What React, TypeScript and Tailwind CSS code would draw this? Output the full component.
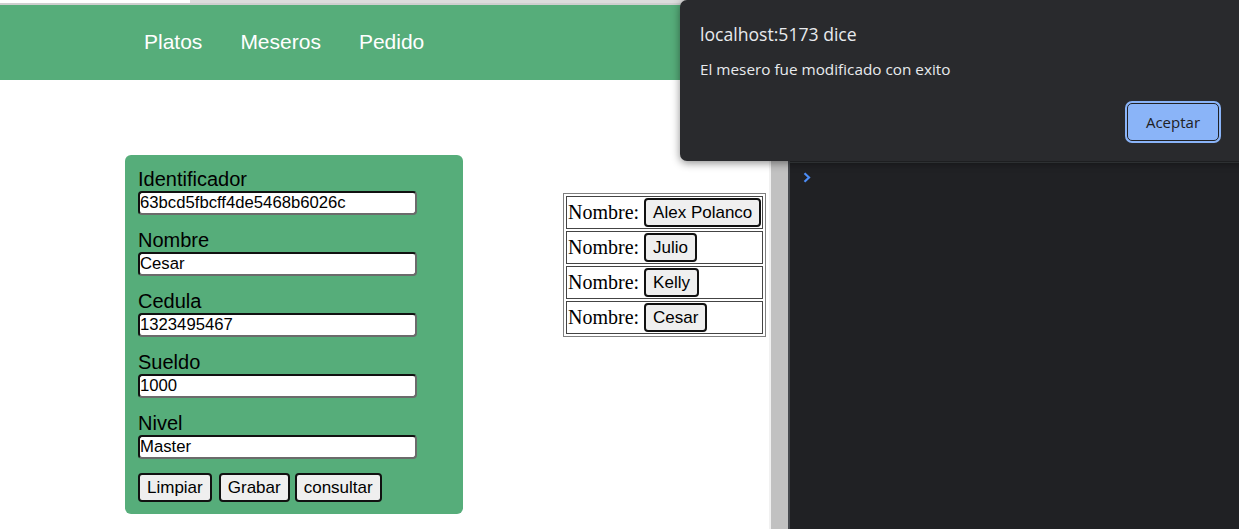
import React from 'react';

const campos = [
  { label: 'Identificador', value: '63bcd5fbcff4de5468b6026c' },
  { label: 'Nombre', value: 'Cesar' },
  { label: 'Cedula', value: '1323495467' },
  { label: 'Sueldo', value: '1000' },
  { label: 'Nivel', value: 'Master' },
];

const meseros = ['Alex Polanco', 'Julio', 'Kelly', 'Cesar'];

const App: React.FC = () => {
  return (
    <div className="relative w-[1239px] h-[529px] overflow-hidden flex bg-white font-['Liberation_Sans',Arial,sans-serif] text-black">
      {/* pagina */}
      <div className="w-[769px] flex flex-col shrink-0">
        <div className="h-[5px] flex">
          <div className="w-[190px] bg-white border-b-2 border-[#cfcfcf]"></div>
          <div className="flex-1 bg-[#dcdcdc] border-b-2 border-[#cfcfcf]"></div>
        </div>
        <nav className="h-[75px] bg-[#56ad7a] flex items-center pl-[144px] gap-[38px] text-white text-[21px] pb-[2px]">
          <span>Platos</span>
          <span>Meseros</span>
          <span>Pedido</span>
        </nav>

        <div className="flex items-start">
          <form className="ml-[125px] mt-[75px] w-[338px] bg-[#56ad7a] rounded-[6px] pt-[13px] pl-[13px] pb-[12px]">
            {campos.map(c => (
              <div key={c.label} className="mb-[14px]">
                <div className="text-[20px] leading-[23px]">{c.label}</div>
                <input
                  readOnly
                  defaultValue={c.value}
                  className="block w-[279px] h-[24px] px-0 bg-white text-[16.7px] text-black rounded-[4px] border-2 border-t-[#111] border-l-[#111] border-b-[#6b6b6b] border-r-[#6b6b6b] outline-none"
                />
              </div>
            ))}
            <div className="flex">
              <button type="button" className="h-[29px] px-[7px] text-[17px] bg-[#efefef] border-2 border-[#111] rounded-[4px]">Limpiar</button>
              <button type="button" className="ml-[7px] h-[29px] px-[7px] text-[17px] bg-[#efefef] border-2 border-[#111] rounded-[4px]">Grabar</button>
              <button type="button" className="ml-[5px] h-[29px] px-[7px] text-[17px] bg-[#efefef] border-2 border-[#111] rounded-[4px]">consultar</button>
            </div>
          </form>

          <table className="ml-[100px] mt-[113px] border border-[#808080] border-separate border-spacing-[2px]">
            <tbody>
              {meseros.map(m => (
                <tr key={m}>
                  <td className="border border-[#444] p-[1px]">
                    <div className="flex items-center gap-[5px] whitespace-nowrap">
                      <span className="font-['Liberation_Serif','Times_New_Roman',serif] text-[20px] leading-[23px]">Nombre:</span>
                      <button type="button" className="h-[29px] px-[7px] text-[17px] bg-[#efefef] border-2 border-[#111] rounded-[4px]">{m}</button>
                    </div>
                  </td>
                </tr>
              ))}
            </tbody>
          </table>
        </div>
      </div>

      {/* barra de desplazamiento */}
      <div className="w-[19px] shrink-0 bg-[#f1f1f1] flex">
        <div className="ml-[2px] w-[17px] bg-[#c1c1c1]"></div>
      </div>

      {/* devtools */}
      <div className="flex-1 bg-[#202124] border-l-2 border-[#45484d] flex flex-col">
        <div className="h-[163px] bg-[#292a2d] border-b border-[#3c4043]"></div>
        <div className="pl-[13px] pt-[9px]">
          <svg width="8" height="11" viewBox="0 0 8 11" fill="none">
            <path d="M1.5 1.2 L6 5.5 L1.5 9.8" stroke="#4c8df6" strokeWidth="2.2" />
          </svg>
        </div>
      </div>

      {/* alerta */}
      <div className="absolute left-[680px] top-0 w-[580px] h-[161px] bg-[#292a2d] rounded-[7px] shadow-[0_2px_8px_rgba(0,0,0,0.45)] font-['Open_Sans','Noto_Sans',sans-serif] text-[#e8eaed] pl-[20px] pt-[22px]">
        <div className="text-[17.6px] leading-[24px]">localhost:5173 dice</div>
        <div className="mt-[13px] text-[15.3px] leading-[21px]">El mesero fue modificado con exito</div>
        <div className="flex justify-end w-[519px] mt-[23px]">
          <button type="button" className="w-[92px] h-[38px] bg-[#8ab4f8] text-[#202124] text-[15px] rounded-[5px] border border-[#202124] ring-2 ring-[#8ab4f8]">Aceptar</button>
        </div>
      </div>
    </div>
  );
};

export default App;
